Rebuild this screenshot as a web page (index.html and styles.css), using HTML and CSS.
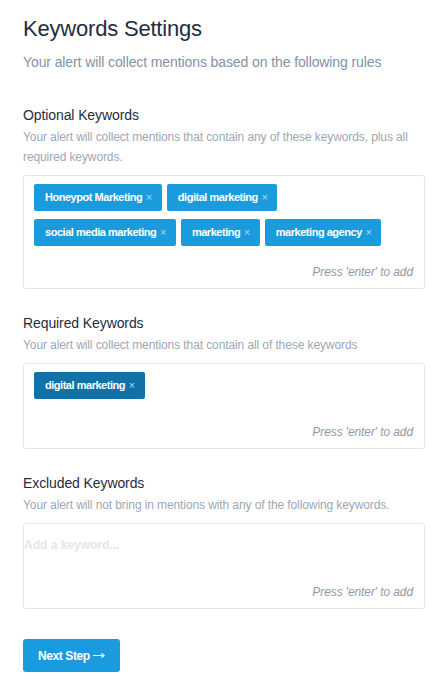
FILE: index.html
```html
<!DOCTYPE html>
<html lang="en">
<head>
  <meta charset="UTF-8" />
  <title>Keywords Settings</title>
  <link rel="stylesheet" href="styles.css">
</head>
<body>

  <div class="page">
    <h1>Keywords Settings</h1>
    <p class="lead">Your alert will collect mentions based on the following rules</p>

    <section class="field first">
      <h2>Optional Keywords</h2>
      <p class="hint">Your alert will collect mentions that contain any of these keywords, plus all required keywords.</p>
      <div class="tagbox">
        <div class="tags">
          <span class="tag">Honeypot Marketing <i>×</i></span>
          <span class="tag">digital marketing <i>×</i></span>
          <span class="tag">social media marketing <i>×</i></span>
          <span class="tag">marketing <i>×</i></span>
          <span class="tag">marketing agency <i>×</i></span>
        </div>
        <div class="enter">Press 'enter' to add</div>
      </div>
    </section>

    <section class="field">
      <h2>Required Keywords</h2>
      <p class="hint">Your alert will collect mentions that contain all of these keywords</p>
      <div class="tagbox">
        <div class="tags">
          <span class="tag dark">digital marketing <i>×</i></span>
        </div>
        <div class="enter">Press 'enter' to add</div>
      </div>
    </section>

    <section class="field">
      <h2>Excluded Keywords</h2>
      <p class="hint">Your alert will not bring in mentions with any of the following keywords.</p>
      <div class="tagbox">
        <div class="tags">
          <span class="placeholder">Add a keyword...</span>
        </div>
        <div class="enter">Press 'enter' to add</div>
      </div>
    </section>

    <button class="next">Next Step
      <svg width="12" height="7" viewBox="0 0 12 7"><path d="M0 3.5h11M8.5 1.5l2.5 2-2.5 2" fill="none" stroke="#fff" stroke-width="1.2"/></svg>
    </button>
  </div>

</body>
</html>
```

FILE: styles.css
```css
body {
  margin: 0;
  background: #fff;
  font-family: "Liberation Sans", Arial, sans-serif;
  color: #1f2d3d;
}
.page {
  padding: 16px 18px 0 23px;
}
h1 {
  margin: 0;
  font-size: 22px;
  font-weight: normal;
  line-height: 26px;
  letter-spacing: -0.2px;
}
.lead {
  margin: 10px 0 0;
  font-size: 14px;
  line-height: 20px;
  letter-spacing: -0.1px;
  color: #8492a6;
}
.field { margin-top: 24px; }
.field.first { margin-top: 33px; }
h2 {
  margin: 0;
  font-size: 14px;
  font-weight: normal;
  line-height: 20px;
  letter-spacing: -0.1px;
}
.hint {
  margin: 2px 0 8px;
  font-size: 12px;
  line-height: 20px;
  letter-spacing: -0.1px;
  color: #9da7b3;
}
.tagbox {
  border: 1px solid #dfe5ec;
  border-radius: 3px;
  padding: 8px 11px 8px 10px;
}
.tags {
  display: flex;
  flex-wrap: wrap;
  gap: 8px 5px;
  min-height: 34px;
  align-content: flex-start;
  padding-bottom: 18px;
}
.tag {
  display: inline-block;
  height: 27px;
  line-height: 27px;
  padding: 0 10px 0 11px;
  border-radius: 2px;
  background: #1a9bdb;
  color: #fff;
  font-size: 11px;
  font-weight: bold;
  letter-spacing: -0.47px;
}
.tag.dark { background: #1172a8; }
.tag i {
  font-style: normal;
  font-weight: normal;
  color: #b5daf0;
  margin-left: 1px;
}
.placeholder {
  margin-left: -10px;
  line-height: 27px;
  font-size: 12px;
  font-weight: bold;
  color: #e1e7ed;
}
.enter {
  text-align: right;
  font-size: 12px;
  font-style: italic;
  line-height: 16px;
  letter-spacing: -0.1px;
  color: #8f9aa8;
}
.next {
  display: flex;
  align-items: center;
  gap: 3px;
  margin-top: 30px;
  height: 33px;
  padding: 0 15px;
  border: none;
  border-radius: 3px;
  background: #1a9be0;
  color: #fff;
  font-family: inherit;
  font-size: 12px;
  font-weight: bold;
  letter-spacing: -0.4px;
}
```
